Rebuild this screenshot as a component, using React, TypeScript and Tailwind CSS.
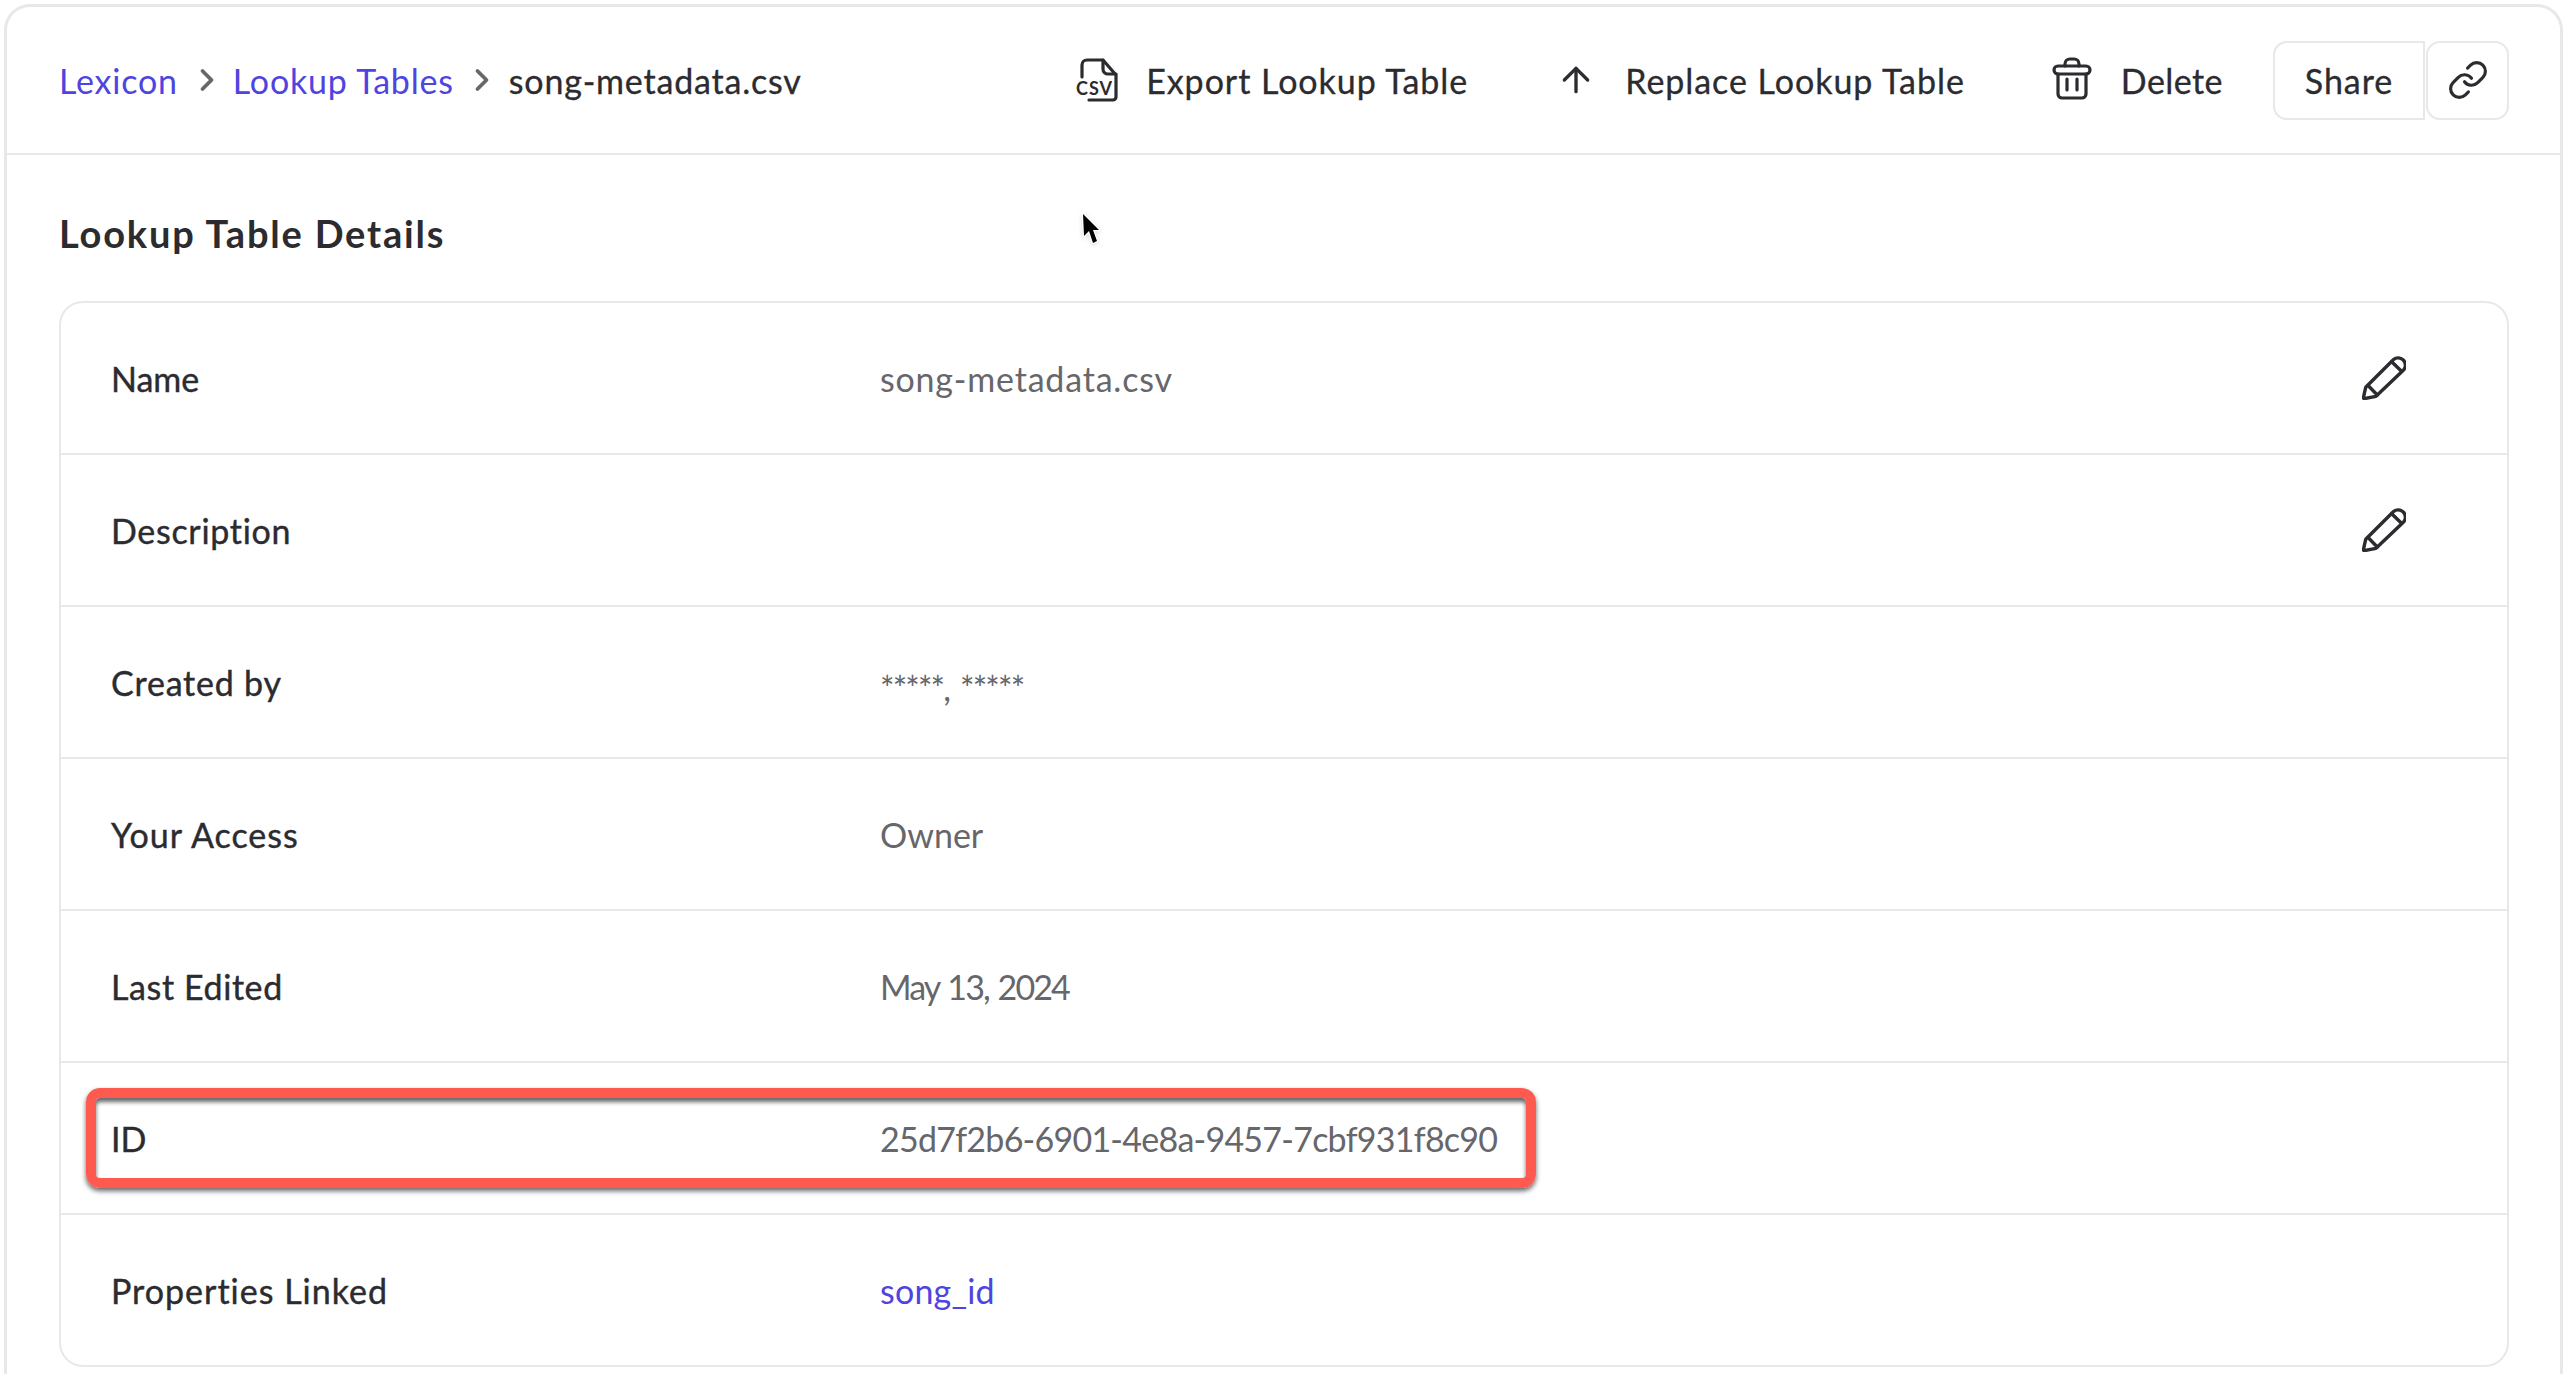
import React from 'react';
import { ArrowUp, ChevronRight, Link } from 'lucide-react';

function CsvIcon() {
  return (
    <svg width="60" height="60" viewBox="0 0 60 60" fill="none" stroke="#2b2b30" strokeWidth="3.2" strokeLinecap="round" strokeLinejoin="round">
      <path d="M16 27V15a5 5 0 0 1 5-5h16l13 15v22a3 3 0 0 1-3 3H23" />
      <path d="M37 10v9a5 5 0 0 0 5 5h8" />
      <text x="10" y="45" textLength="37" lengthAdjust="spacingAndGlyphs" fontSize="18" fontFamily="Lato, sans-serif" fontWeight="700" fill="#2b2b30" stroke="none">
        CSV
      </text>
    </svg>
  );
}

function TrashIcon() {
  return (
    <svg width="60" height="60" viewBox="0 0 60 60" fill="none" stroke="#2b2b30" strokeWidth="3.2" strokeLinecap="round" strokeLinejoin="round">
      <path d="M25 16v-2a5 5 0 0 1 5-5h4a5 5 0 0 1 5 5v2" />
      <rect x="14" y="16" width="36" height="8" rx="4" />
      <path d="M18 24v20a4 4 0 0 0 4 4h20a4 4 0 0 0 4-4V24" />
      <path d="M27 29v11M37 29v11" />
    </svg>
  );
}

function PencilIcon() {
  return (
    <svg width="44" height="44" viewBox="0 0 44 44" fill="none" stroke="#2b2b30" strokeWidth="3.4" strokeLinecap="round" strokeLinejoin="round">
      <path d="M3.7 31.3 31.3 3.7a7.3 7.3 0 0 1 10.3 10.3L14 40.3 3 42.5Q1 42.8 1.5 41Z" />
      <path d="M6.3 29.7 15.3 39M29.7 5.7 39 14.7" />
    </svg>
  );
}

function Cursor() {
  return (
    <svg className="absolute left-[1060px] top-[200px] drop-shadow-sm" width="60" height="60" viewBox="0 0 60 60">
      <path d="M23 14 24 36 29 31 33 43 37 41 33 30 39 30Z" fill="#000" stroke="#fff" strokeWidth="2.5" strokeLinejoin="round" paintOrder="stroke" />
    </svg>
  );
}

const rows = [
  { label: 'Name', labelClass: '', value: 'song-metadata.csv', valueClass: 'tracking-[0.8px]', editable: true },
  { label: 'Description', labelClass: 'tracking-[0.7px]', value: '', valueClass: '', editable: true },
  { label: 'Created by', labelClass: 'tracking-[0.8px]', value: '*****, *****', valueClass: 'pt-[10px] tracking-[-1.8px] [word-spacing:4px]' },
  { label: 'Your Access', labelClass: 'tracking-[1px]', value: 'Owner', valueClass: '' },
  { label: 'Last Edited', labelClass: 'tracking-[0.6px]', value: 'May 13, 2024', valueClass: 'tracking-[-1.9px] [word-spacing:2px]' },
  { label: 'ID', labelClass: '', value: '25d7f2b6-6901-4e8a-9457-7cbf931f8c90', valueClass: 'tracking-[-0.75px]', highlight: true },
  { label: 'Properties Linked', labelClass: 'tracking-[1px]', value: 'song_id', valueClass: 'tracking-[0.2px]', link: true },
];

export default function App() {
  return (
    <div className="relative h-[1374px] overflow-hidden bg-white pl-[4px] pr-[3px] pt-[4px] font-['Lato',sans-serif] text-[34px] text-[#2b2b30]">
      <div className="h-full rounded-t-[26px] border-x-[3px] border-t-[3px] border-[#e8e8e8]">
        {/* Top bar */}
        <div className="flex h-[148px] items-center justify-between border-b-2 border-[#e8e8e8] pl-[52px] pr-[51px]">
          <div className="flex items-center tracking-[0.8px]">
            <a className="text-[#4f44e0]">Lexicon</a>
            <ChevronRight size={36} strokeWidth={2.5} className="ml-[11px] mr-[8px] text-[#66666b]" />
            <a className="text-[#4f44e0]">Lookup Tables</a>
            <ChevronRight size={36} strokeWidth={2.5} className="ml-[10px] mr-[9px] text-[#66666b]" />
            <span className="[-webkit-text-stroke:0.3px]">song-metadata.csv</span>
          </div>
          <div className="flex items-center tracking-[0.95px] [-webkit-text-stroke:0.3px]">
            <div className="flex items-center">
              <CsvIcon />
              <span className="ml-[20px]">Export Lookup Table</span>
            </div>
            <div className="ml-[88px] flex items-center">
              <ArrowUp size={40} strokeWidth={2} />
              <span className="ml-[29px]">Replace Lookup Table</span>
            </div>
            <div className="ml-[75px] flex items-center">
              <TrashIcon />
              <span className="ml-[21px] tracking-[0.45px]">Delete</span>
            </div>
            <button className="ml-[50px] flex h-[79px] w-[152px] items-center justify-center rounded-l-[14px] border-2 border-[#e8e8e8]">
              Share
            </button>
            <button className="ml-[1px] flex h-[79px] w-[83px] items-center justify-center rounded-[14px] border-2 border-[#e8e8e8]">
              <Link size={42} strokeWidth={1.8} />
            </button>
          </div>
        </div>

        {/* Details */}
        <div className="pl-[52px] pr-[51px]">
          <div className="flex h-[146px] items-center pt-[10px]">
            <h2 className="text-[38px] font-bold tracking-[1.8px]">Lookup Table Details</h2>
          </div>
          <div className="rounded-[24px] border-2 border-[#e8e8e8]">
            {rows.map((row) => (
              <div
                key={row.label}
                className="relative flex h-[152px] items-center border-b-2 border-[#e8e8e8] pl-[50px] pr-[101px] last:h-[150px] last:border-b-0"
              >
                <div className={`w-[769px] shrink-0 [-webkit-text-stroke:0.4px] ${row.labelClass}`}>{row.label}</div>
                <div className={`flex-1 ${row.link ? 'text-[#4f44e0]' : 'text-[#66666b]'} ${row.valueClass}`}>{row.value}</div>
                {row.editable && <PencilIcon />}
                {row.highlight && (
                  <div className="absolute left-[25px] top-[25px] h-[100px] w-[1450px] rounded-[14px] border-[10px] border-[#ff5a4f] shadow-[0_3px_5px_rgba(0,0,0,0.6),inset_0_4px_4px_rgba(0,0,0,0.6)]" />
                )}
              </div>
            ))}
          </div>
        </div>
      </div>
      <Cursor />
    </div>
  );
}
